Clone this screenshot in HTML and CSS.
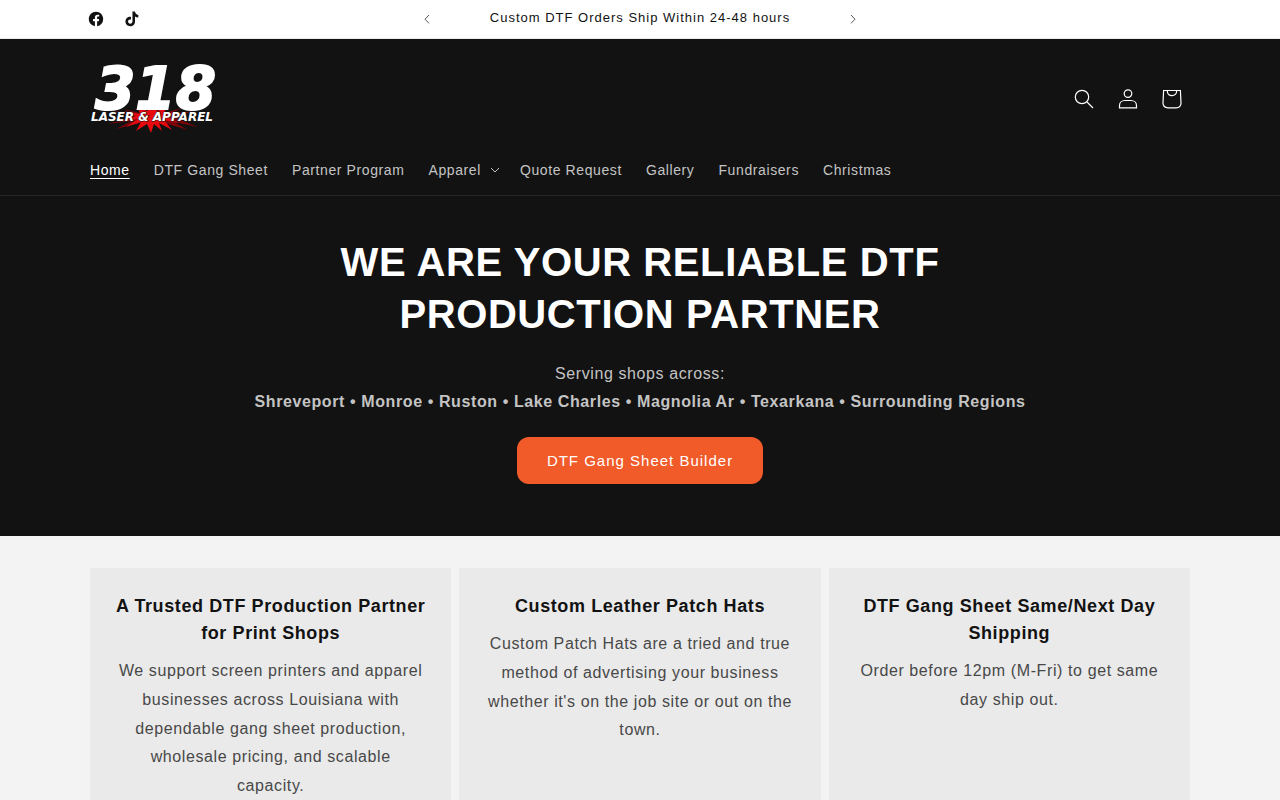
FILE: index.html
```
<!DOCTYPE html>
<html lang="en">

<head>
  <meta charset="UTF-8" />
  <meta name="viewport" content="width=device-width, initial-scale=1.0"/>
  <title>318 Laser &amp; Apparel</title>
  <link rel="stylesheet" href="styles.css">
</head>
<body>
  <div class="announcement">
    <div class="announcement-inner page-width">
      <div class="social">
        <a href="#" aria-label="Facebook">
          <svg width="18" height="18" viewBox="0 0 20 20"><path fill="currentColor" d="M18 10.05c0-4.45-3.58-8.05-8-8.05s-8 3.6-8 8.05c0 4.02 2.93 7.35 6.75 7.95v-5.62H6.72v-2.33h2.03V8.28c0-2.02 1.2-3.13 3.02-3.13.88 0 1.79.16 1.79.16v1.98h-1c-1 0-1.31.62-1.31 1.26v1.5h2.22l-.35 2.33h-1.87V18A8.04 8.04 0 0 0 18 10.05Z"/></svg>
        </a>
        <a href="#" aria-label="TikTok">
          <svg width="18" height="18" viewBox="0 0 20 20"><path fill="currentColor" d="M10.51 1.74h2.8c.2 2.15 1.48 3.55 3.7 3.72v2.82a6.9 6.9 0 0 1-3.67-1.18v5.6c0 3.15-2.24 5.38-5.27 5.38-3.1 0-5.35-2.27-5.35-5.23 0-3.28 2.77-5.57 6.15-5.17v2.96c-1.84-.5-3.25.46-3.25 2.13 0 1.42 1.06 2.4 2.42 2.4 1.48 0 2.47-.97 2.47-2.68V1.74Z"/></svg>
        </a>
      </div>
      <div class="slider">
        <button type="button" aria-label="Previous announcement">
          <svg width="10" height="10" viewBox="0 0 10 10"><path d="M7 1 3 5.2 7 9.4"/></svg>
        </button>
        <p>Custom DTF Orders Ship Within 24-48 hours</p>
        <button type="button" aria-label="Next announcement">
          <svg width="10" height="10" viewBox="0 0 10 10"><path d="m3 1 4 4.2L3 9.4"/></svg>
        </button>
      </div>
    </div>
  </div>

  <header>
    <div class="page-width">
      <div class="header-top">
        <a class="logo" href="#" aria-label="318 Laser and Apparel">
          <svg width="132" height="72" viewBox="0 0 132 72">
            <!-- red burst -->
            <path fill="#7a0508" d="M22 47 46 52 34 46 50 50 74 50 92 45 80 51 104 48 84 54 108 64 84 59 98 67 74 60 50 60 26 66 42 58 18 61 42 54z"/>
            <path fill="#e60a10" d="M34 48 50 51 47 43 57 48 62 42 67 48 78 43 74 50 90 49 78 54 88 60 74 57 82 67 69 60 72 68 64 61 61 70 57 61 46 68 51 59 36 64 48 56 34 58 46 53z"/>
            <text class="logo-number" x="5" y="46">318</text>
            <text class="logo-name" x="1" y="58">LASER &amp; APPAREL</text>
          </svg>
        </a>
        <div class="header-icons">
          <a href="#" aria-label="Search">
            <svg width="20" height="20" viewBox="0 0 20 20"><circle cx="8" cy="8" r="6.7"/><path d="m13 13 6 6"/></svg>
          </a>
          <a href="#" aria-label="Log in">
            <svg width="20" height="20" viewBox="0 0 20 20"><circle cx="10" cy="4.6" r="3.8"/><path d="M1.5 18.8v-2.3c0-3 2.4-5 5.5-5h6c3.1 0 5.5 2 5.5 5v2.3z"/></svg>
          </a>
          <a href="#" aria-label="Cart">
            <svg width="20" height="20" viewBox="0 0 20 20"><path d="M1.6 1.5h16.8l.6 12.5c0 3-2 4.800-5 4.800H6c-3 0-5-1.800-5-4.800zM5.300 1.500c0 3.500 2 5.200 4.700 5.200s4.700-1.700 4.700-5.200"/></svg>
          </a>
        </div>
      </div>
      <nav>
        <a class="active" href="#">Home</a>
        <a href="#">DTF Gang Sheet</a>
        <a href="#">Partner Program</a>
        <button type="button">Apparel
          <svg width="10" height="6" viewBox="0 0 10 6"><path d="m1 1 4 4 4-4"/></svg>
        </button>
        <a href="#">Quote Request</a>
        <a href="#">Gallery</a>
        <a href="#">Fundraisers</a>
        <a href="#">Christmas</a>
      </nav>
    </div>
  </header>

  <main>
    <section class="hero">
      <h1>WE ARE YOUR RELIABLE DTF PRODUCTION PARTNER</h1>
      <p>Serving shops across:<br><strong>Shreveport • Monroe • Ruston • Lake Charles • Magnolia Ar • Texarkana • Surrounding Regions</strong></p>
      <a class="hero-button" href="#">DTF Gang Sheet Builder</a>
    </section>

    <section class="features">
      <div class="cards page-width">
        <div class="card">
          <h3>A Trusted DTF Production Partner for Print Shops</h3>
          <p>We support screen printers and apparel businesses across Louisiana with dependable gang sheet production, wholesale pricing, and scalable capacity.</p>
        </div>
        <div class="card">
          <h3>Custom Leather Patch Hats</h3>
          <p>Custom Patch Hats are a tried and true method of advertising your business whether it's on the job site or out on the town.</p>
        </div>
        <div class="card">
          <h3>DTF Gang Sheet Same/Next Day Shipping</h3>
          <p>Order before 12pm (M-Fri) to get same day ship out.</p>
        </div>
      </div>
    </section>
  </main>
</body>
</html>
```
FILE: styles.css
```
* {
  margin: 0;
  padding: 0;
  box-sizing: border-box;
}

html {
  scrollbar-width: none;
}

body {
  background-color: #f3f3f3;
  color: #121212;
  font-family: "Liberation Sans", Arial, sans-serif;
  font-size: 16px;
  letter-spacing: 0.0375em;
}

a {
  color: inherit;
  text-decoration: none;
}

button {
  border: none;
  background: none;
  color: inherit;
  font: inherit;
  letter-spacing: inherit;
  cursor: pointer;
}

svg {
  display: block;
  overflow: visible;
}

.page-width {
  max-width: 1200px;
  margin: 0 auto;
  padding: 0 50px;
}

/* announcement bar */
.announcement {
  background-color: #fff;
  border-bottom: 1px solid #ebebeb;
}

.announcement-inner {
  display: grid;
  grid-template-columns: 1fr 2fr 1fr;
  align-items: center;
  width: 100%;
  max-width: 1280px;
  height: 38px;
  padding: 0 87px;
}

.social {
  display: flex;
  gap: 18px;
}

.slider {
  display: flex;
  justify-content: space-between;
  align-items: center;
  width: 100%;
  max-width: 436px;
  margin: 0 auto;
}

.slider p {
  font-size: 13px;
  line-height: 22px;
  padding-bottom: 2px;
  letter-spacing: 1px;
}

.slider svg {
  fill: none;
  stroke: #555;
}

/* header */
header {
  background-color: #121212;
  color: #fff;
  border-bottom: 1px solid #262626;
}

.header-top {
  display: flex;
  justify-content: space-between;
  align-items: center;
  padding-top: 24px;
}

.logo-number {
  fill: #fff;
  stroke: #fff;
  stroke-width: 2px;
  font: italic bold 58px "DejaVu Sans", sans-serif;
  letter-spacing: 0;
}

.logo-name {
  fill: #fff;
  stroke: #121212;
  stroke-width: 1px;
  paint-order: stroke;
  font: italic bold 12px "DejaVu Sans", sans-serif;
  letter-spacing: 0;
}

.header-icons {
  display: flex;
  gap: 24px;
  padding-right: 8px;
}

.header-icons svg {
  fill: none;
  stroke: #fff;
  stroke-width: 1.2px;
}

nav {
  display: flex;
  flex-wrap: wrap;
  gap: 24px;
  padding: 24px 0 14px;
  color: #c4c4c4;
  font-size: 14px;
  line-height: 22px;
}

nav a:hover,
nav .active {
  color: #fff;
  text-decoration: underline;
  text-underline-offset: 3px;
}

nav button {
  display: flex;
  align-items: center;
  gap: 9px;
  margin-right: -4px;
}

nav svg {
  fill: none;
  stroke: #c4c4c4;
}

/* hero */
.hero {
  display: flex;
  flex-direction: column;
  align-items: center;
  padding: 40px 50px 52px;
  background-color: #121212;
  color: #c4c4c4;
  text-align: center;
}

.hero h1 {
  max-width: 720px;
  color: #fff;
  font-size: 40px;
  line-height: 52px;
}

.hero p {
  margin: 20px 0 21px;
  line-height: 28px;
}

.hero-button {
  padding: 0 30px;
  border-radius: 12px;
  background-color: #f15a29;
  color: #fff;
  font-size: 15px;
  line-height: 47px;
  letter-spacing: 1px;
}

/* feature cards */
.features {
  padding: 32px 0;
}

.cards {
  display: grid;
  grid-template-columns: repeat(3, 1fr);
  gap: 8px;
}

.card {
  padding: 25px;
  background-color: #eaeaea;
  text-align: center;
}

.card h3 {
  font-size: 18px;
  line-height: 27px;
}

.card p {
  margin-top: 10px;
  color: #484848;
  line-height: 1.8;
}
```
